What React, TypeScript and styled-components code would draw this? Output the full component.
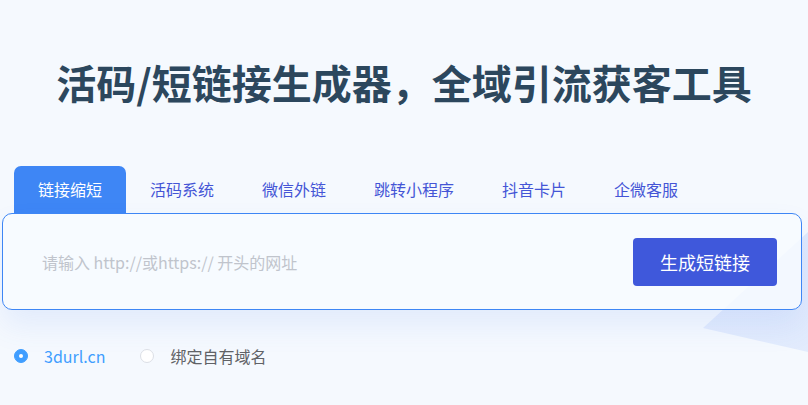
import React, { FC, useState } from 'react';
import styled, { createGlobalStyle } from 'styled-components';

const GlobalStyle = createGlobalStyle`
  html, body {
    margin: 0;
    padding: 0;
    background: #f5f9fe;
  }
  body {
    font-family: "Noto Sans CJK SC", "Noto Sans", sans-serif;
  }
`;

const Page = styled.div`
  position: relative;
  width: 808px;
  height: 405px;
  overflow: hidden;
  background: #f5f9fe;
`;

// faint blue wedge in the lower right corner, behind the content
const Wedge = styled.div`
  position: absolute;
  left: 0;
  top: 0;
  width: 808px;
  height: 405px;
  background: linear-gradient(180deg, #dde8fc 0%, #e3ecfd 100%);
  clip-path: polygon(703px 328px, 808px 232px, 808px 352px);
  z-index: 0;
`;

const Content = styled.div`
  position: relative;
  z-index: 1;
  display: flex;
  flex-direction: column;
`;

const Title = styled.h1`
  margin: 54px 0 0;
  font-size: 40px;
  line-height: 56px;
  font-weight: 700;
  color: #2c475d;
  text-align: center;
`;

const Tabs = styled.div`
  display: flex;
  margin: 56px 0 0 14px;
`;

const Tab = styled.button<{ $active?: boolean }>`
  height: 47px;
  padding: 0 24px;
  border: none;
  border-radius: 7px 7px 0 0;
  background: ${(p) => (p.$active ? '#3e86f5' : 'transparent')};
  color: ${(p) => (p.$active ? '#ffffff' : '#4455d6')};
  font-family: inherit;
  font-size: 16px;
  line-height: 47px;
  cursor: pointer;
`;

const Box = styled.div`
  display: flex;
  align-items: center;
  justify-content: space-between;
  box-sizing: border-box;
  width: 800px;
  height: 97px;
  margin-left: 2px;
  padding: 0 24px 0 37px;
  border: 1px solid #3e86f5;
  border-radius: 10px;
  background: rgba(248, 251, 255, 0.8);
  box-shadow: 0 16px 30px rgba(70, 120, 235, 0.1);
`;

const UrlInput = styled.input`
  flex: 1;
  padding: 0 2px;
  border: none;
  outline: none;
  background: transparent;
  font-family: inherit;
  font-size: 16px;
  color: #333;
  &::placeholder {
    color: #c0c4cc;
  }
`;

const Submit = styled.button`
  width: 144px;
  height: 48px;
  border: none;
  border-radius: 4px;
  background: #3f58db;
  color: #fff;
  font-family: inherit;
  font-size: 18px;
  cursor: pointer;
`;

const Options = styled.div`
  display: flex;
  align-items: center;
  gap: 35px;
  margin: 34px 0 0 14px;
`;

const Option = styled.label<{ $checked?: boolean }>`
  display: flex;
  align-items: center;
  gap: 16px;
  height: 24px;
  font-size: 16px;
  color: ${(p) => (p.$checked ? '#409eff' : '#606266')};
  cursor: pointer;
`;

const Dot = styled.span<{ $checked?: boolean }>`
  box-sizing: border-box;
  width: 14px;
  height: 14px;
  border-radius: 50%;
  border: 1px solid ${(p) => (p.$checked ? '#409eff' : '#dcdfe6')};
  background: ${(p) => (p.$checked ? '#409eff' : '#fff')};
  display: flex;
  align-items: center;
  justify-content: center;
  &::after {
    content: '';
    width: 4px;
    height: 4px;
    border-radius: 50%;
    background: #fff;
    display: ${(p) => (p.$checked ? 'block' : 'none')};
  }
`;

const tabs = ['链接缩短', '活码系统', '微信外链', '跳转小程序', '抖音卡片', '企微客服'];
const domains = ['3durl.cn', '绑定自有域名'];

const App: FC = () => {
  const [active, setActive] = useState(0);
  const [domain, setDomain] = useState(0);

  return (
    <Page>
      <GlobalStyle />
      <Wedge />
      <Content>
        <Title>活码/短链接生成器，全域引流获客工具</Title>
        <Tabs>
          {tabs.map((t, i) => (
            <Tab key={t} $active={i === active} onClick={() => setActive(i)}>
              {t}
            </Tab>
          ))}
        </Tabs>
        <Box>
          <UrlInput placeholder="请输入 http://或https:// 开头的网址" />
          <Submit>生成短链接</Submit>
        </Box>
        <Options>
          {domains.map((d, i) => (
            <Option key={d} $checked={i === domain} onClick={() => setDomain(i)}>
              <Dot $checked={i === domain} />
              {d}
            </Option>
          ))}
        </Options>
      </Content>
    </Page>
  );
};

export default App;
